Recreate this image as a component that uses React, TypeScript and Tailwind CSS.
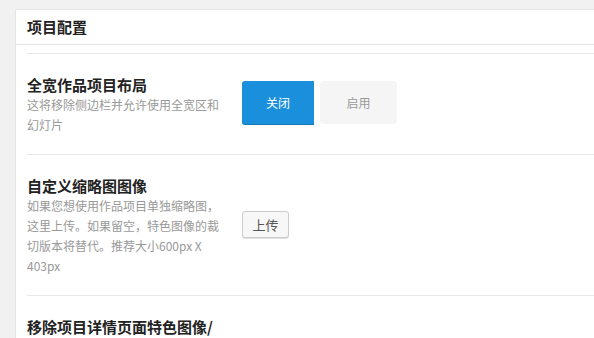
import React from "react";

const font = { fontFamily: '"Noto Sans CJK SC", "Noto Sans", sans-serif' };

export default function App() {
  return (
    <div className="w-[594px] h-[338px] overflow-hidden bg-[#f1f1f1] pl-[15px] pt-[9px]" style={font}>
      <div className="w-[700px] bg-white border-t border-l border-[#e5e5e5]">
        <div className="h-[35px] border-b border-[#e5e5e5] pl-[11px] flex items-center">
          <span className="text-[15px] leading-[20px] font-bold text-[#222]">项目配置</span>
        </div>
        <div className="pl-[11px] pt-[8px]">
          <div className="border-t border-[#e8e8e8] pt-[21px] pb-[19px] flex items-center">
            <div className="w-[200px] shrink-0">
              <div className="text-[15px] leading-[20px] font-bold text-[#222]">全宽作品项目布局</div>
              <div className="text-[12px] leading-[20px] text-[#999]">这将移除侧边栏并允许使用全宽区和幻灯片</div>
            </div>
            <div className="ml-[15px] flex items-center -mt-[5px]">
              <div className="w-[72px] h-[43px] bg-[#1a8fdc] rounded-l-[3px] shadow-[0_1px_0_#1577b8] flex items-center justify-center text-white text-[12px]">关闭</div>
              <div className="ml-[6px] w-[77px] h-[43px] bg-[#f5f5f5] rounded-[4px] flex items-center justify-center text-[#999] text-[12px]">启用</div>
            </div>
          </div>
          <div className="border-t border-[#e8e8e8] pt-[21px] pb-[19px] flex items-center">
            <div className="w-[200px] shrink-0">
              <div className="text-[15px] leading-[20px] font-bold text-[#222]">自定义缩略图图像</div>
              <div className="text-[12px] leading-[20px] text-[#999]">如果您想使用作品项目单独缩略图，这里上传。如果留空，特色图像的裁切版本将替代。推荐大小600px X 403px</div>
            </div>
            <div className="ml-[15px] -mt-[3px]">
              <div className="w-[47px] h-[27px] bg-[#f7f7f7] border border-[#cccccc] rounded-[3px] shadow-[0_1px_0_#e0e0e0] flex items-center justify-center text-[#555] text-[13px]">上传</div>
            </div>
          </div>
          <div className="border-t border-[#e8e8e8] pt-[21px] pb-[19px]">
            <div className="text-[15px] leading-[20px] font-bold text-[#222]">移除项目详情页面特色图像/</div>
          </div>
        </div>
      </div>
    </div>
  );
}
